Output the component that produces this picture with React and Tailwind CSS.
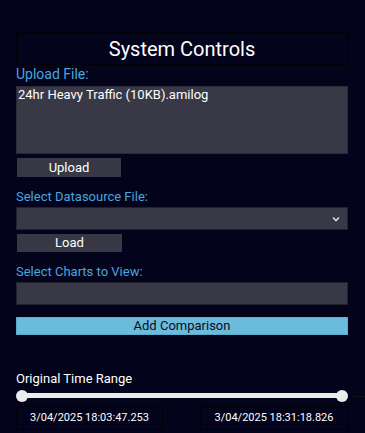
function Label({ children, big }) {
  return (
    <div className={big ? "text-[14px] leading-[16px] text-[#4aa6df]" : "text-[13px] leading-[16px] text-[#4aa6df]"}>
      {children}
    </div>
  );
}

function App() {
  return (
    <div className="min-h-[433px] w-[365px] bg-[#03031b] font-['Roboto',sans-serif] overflow-hidden">
      <div className="pt-[32px] pl-[16px] pr-[17px] flex flex-col">
        <div className="h-[33px] border border-[#000008] flex items-center justify-center text-[20px] text-white">
          System Controls
        </div>
        <div className="mt-[1px]">
          <Label big>Upload File:</Label>
        </div>
        <div className="mt-[4px] h-[68px] bg-[#383846] border border-[#2a2a35] px-[1px] text-[13px] leading-[16px] text-white">
          24hr Heavy Traffic (10KB).amilog
        </div>
        <button className="mt-[4px] ml-[1px] w-[104px] h-[19px] bg-[#373745] text-white text-[13px] leading-[16px]">
          Upload
        </button>
        <div className="mt-[12px]">
          <Label>Select Datasource File:</Label>
        </div>
        <div className="mt-[2px] h-[23px] bg-[#383846] border border-[#22222c] flex items-center justify-end pr-[6px]">
          <svg width="10" height="8" viewBox="0 0 10 8">
            <path d="M2 2.5 L5 5.5 L8 2.5" stroke="#d8d8e0" strokeWidth="1.6" fill="none" />
          </svg>
        </div>
        <button className="mt-[4px] ml-[1px] w-[105px] h-[18px] bg-[#373745] text-white text-[13px] leading-[16px]">
          Load
        </button>
        <div className="mt-[12px]">
          <Label>Select Charts to View:</Label>
        </div>
        <div className="mt-[2px] h-[23px] bg-[#383846] border border-[#22222c]" />
        <button className="mt-[12px] h-[18px] bg-[#6bbcdc] border border-[#5aaacb] text-[#0b0b20] text-[13px] leading-[16px]">
          Add Comparison
        </button>
        <div className="mt-[36px] text-[13px] leading-[16px] text-white">Original Time Range</div>
        <div className="mt-[3px] relative h-[12px]">
          <div className="absolute left-[5px] right-[5px] top-[3px] h-[5px] bg-[#ececec]" />
          <div className="absolute left-0 top-0 w-[12px] h-[12px] rounded-full bg-[#ececec]" />
          <div className="absolute right-0 top-0 w-[12px] h-[12px] rounded-full bg-[#ececec]" />
          <div className="absolute right-[-17px] top-[6px] w-[11px] h-[1px] bg-[#111]" />
        </div>
        <div className="mt-[4px] flex justify-between">
          <div className="w-[147px] h-[24px] border border-[#000008] flex items-center justify-center text-white text-[11px]">
            3/04/2025 18:03:47.253
          </div>
          <div className="w-[148px] h-[24px] border border-[#000008] flex items-center justify-center text-white text-[11px]">
            3/04/2025 18:31:18.826
          </div>
        </div>
      </div>
    </div>
  );
}

export default App;
